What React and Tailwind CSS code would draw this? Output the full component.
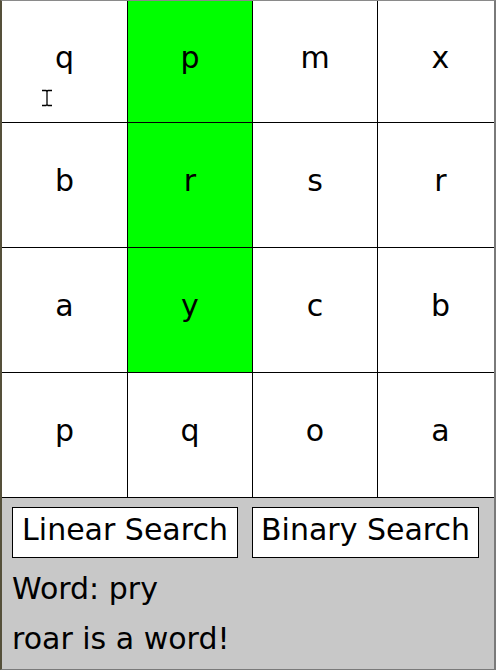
const rows = [
    ["q", "p", "m", "x"],
    ["b", "r", "s", "r"],
    ["a", "y", "c", "b"],
    ["p", "q", "o", "a"],
];

const highlighted = new Set(["0-1", "1-1", "2-1"]);

function Cursor() {
    return (
        <svg className="absolute left-[39px] top-[88px]" width="12" height="18" viewBox="0 0 12 18">
            <path d="M1 1.5h4L6 2.5 7 1.5h4M6 2.5v13M1 16.5h4l1-1 1 1h4" fill="none" stroke="#fff" strokeWidth="3" />
            <path d="M1 1.5h4L6 2.5 7 1.5h4M6 2.5v13M1 16.5h4l1-1 1 1h4" fill="none" stroke="#000" strokeWidth="1.3" />
        </svg>
    );
}

export default function App() {
    return (
        <div
            className="relative flex h-[670px] w-[496px] flex-col overflow-hidden border-t border-b border-l-2 border-r-2 border-t-[#8a8a8a] border-b-[#7a7a7a] border-l-[#55503a] border-r-[#7a7a7a] bg-[#c8c8c8]"
            style={{ fontFamily: '"DejaVu Sans", sans-serif' }}
        >
            <div className="grid w-[501px] shrink-0 grid-cols-[126px_125px_125px_125px] grid-rows-[122px_125px_125px_125px] bg-white">
                {rows.map((row, r) =>
                    row.map((letter, c) => (
                        <div
                            key={`${r}-${c}`}
                            className={`flex items-center justify-center border-b border-black pb-[9px] text-[30px] text-black ${
                                c < 3 ? "border-r" : ""
                            } ${highlighted.has(`${r}-${c}`) ? "bg-[#00ff00]" : "bg-white"}`}
                        >
                            {letter}
                        </div>
                    ))
                )}
            </div>

            <div className="flex flex-col px-[10px] pt-[9px] text-[30px] text-black">
                <div className="flex gap-[14px]">
                    <button className="h-[51px] w-[226px] border border-black bg-white pb-[6px] text-[30px] leading-none">
                        Linear Search
                    </button>
                    <button className="h-[51px] w-[227px] border border-black bg-white pb-[6px] text-[30px] leading-none">
                        Binary Search
                    </button>
                </div>
                <p className="mt-[6px] leading-[50px]">Word: pry</p>
                <p className="leading-[50px]">roar is a word!</p>
            </div>

            <Cursor />
        </div>
    );
}
